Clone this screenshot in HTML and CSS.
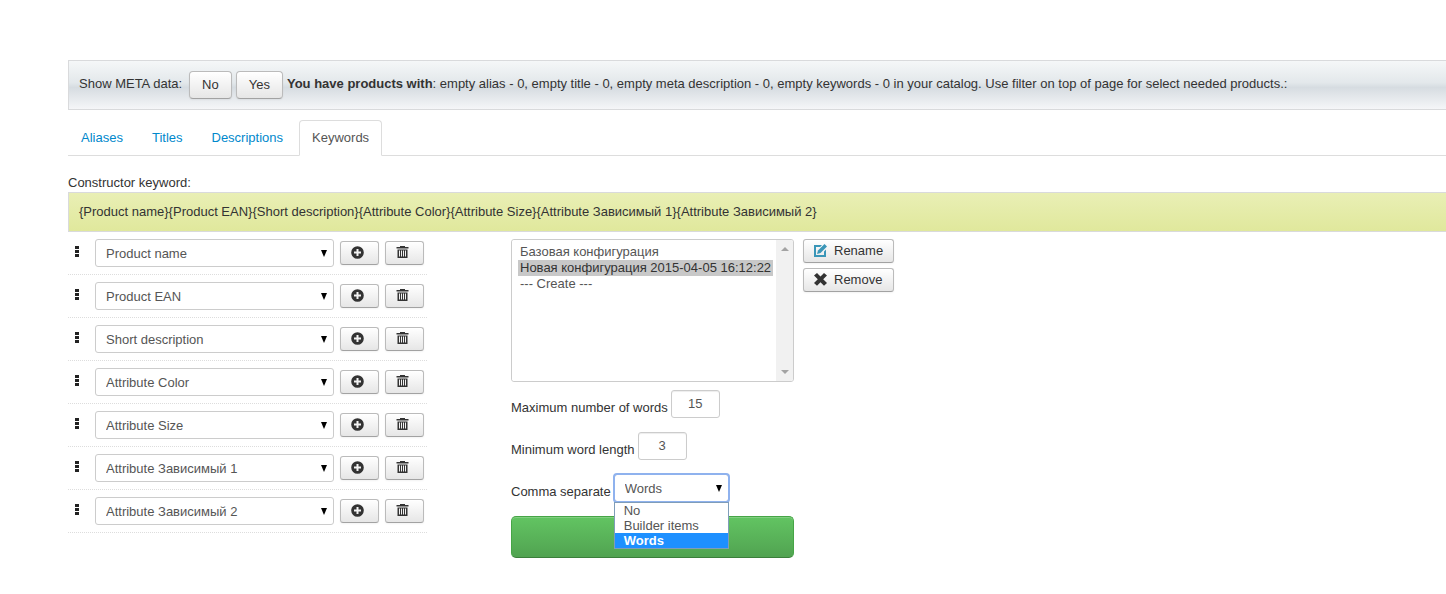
FILE: index.html
```
<!DOCTYPE html>
<html lang="en">
<head>
    <meta charset="UTF-8">
    <meta name="viewport" content="width=device-width, initial-scale=1.0">
    <title>Keywords constructor</title>
    <link rel="stylesheet" href="styles.css">
</head>
<body>
    <svg class="sprite" aria-hidden="true">
        <symbol id="icon-menu" viewBox="0 0 4 12">
            <path d="M0 0h4v3H0zM0 4h4v3H0zM0 8h4v3H0z"/>
        </symbol>
        <symbol id="icon-plus" viewBox="0 0 13 13">
            <path fill-rule="evenodd" d="M6.500 0.200a6.300 6.300 0 1 0 0 12.600a6.300 6.300 0 1 0 0-12.600zM5.500 3h2v2.500H10v2H7.500V10h-2V7.500H3v-2h2.500z"/>
        </symbol>
        <symbol id="icon-trash" viewBox="0 0 13 13">
            <path fill-rule="evenodd" d="M4 0h5v1h3.500v1.500h-12V1H4zM1.500 3.500h10V12h-10zM3 4.500v6h1v-6zM5 4.500v6h1v-6zM7 4.500v6h1v-6zM9 4.500v6h1v-6z"/>
        </symbol>
        <symbol id="icon-edit" viewBox="0 0 13 13">
            <path d="M0 1h8L6.200 3H2v8h8V7.500l2-2V13H0z"/>
            <path d="M10.500 0L13 2.500 6.500 9 3 10 4 6.500z"/>
        </symbol>
        <symbol id="icon-cancel" viewBox="0 0 13 13">
            <path d="M3 0L6.500 3.500 10 0 13 2.500 9.200 6.300 13 10 10 12.800 6.500 9.200 3 12.800 0 10 3.800 6.300 0 2.500z"/>
        </symbol>
    </svg>

    <div class="page">
        <div class="meta-bar">
            <span class="meta-label">Show META data:</span>
            <button type="button" class="btn">No</button>
            <button type="button" class="btn">Yes</button>
            <span><strong>You have products with</strong>: empty alias - 0, empty title - 0, empty meta description - 0, empty keywords - 0 in your catalog. Use filter on top of page for select needed products.:</span>
        </div>

        <nav class="tabs">
            <a href="#aliases">Aliases</a>
            <a href="#titles">Titles</a>
            <a href="#descriptions">Descriptions</a>
            <a href="#keywords" class="active">Keywords</a>
        </nav>

        <div class="constructor-title">Constructor keyword:</div>
        <div class="constructor">{Product name}{Product EAN}{Short description}{Attribute Color}{Attribute Size}{Attribute Зависимый 1}{Attribute Зависимый 2}</div>

        <div class="columns">
            <ul class="items">
                <li class="item">
                    <svg class="drag"><use href="#icon-menu"/></svg>
                    <select class="select" aria-label="Item 1"><option>Product name</option></select>
                    <button type="button" class="btn btn-small btn-icon" aria-label="Add"><svg class="icon"><use href="#icon-plus"/></svg></button>
                    <button type="button" class="btn btn-small btn-icon" aria-label="Delete"><svg class="icon"><use href="#icon-trash"/></svg></button>
                </li>
                <li class="item">
                    <svg class="drag"><use href="#icon-menu"/></svg>
                    <select class="select" aria-label="Item 2"><option>Product EAN</option></select>
                    <button type="button" class="btn btn-small btn-icon" aria-label="Add"><svg class="icon"><use href="#icon-plus"/></svg></button>
                    <button type="button" class="btn btn-small btn-icon" aria-label="Delete"><svg class="icon"><use href="#icon-trash"/></svg></button>
                </li>
                <li class="item">
                    <svg class="drag"><use href="#icon-menu"/></svg>
                    <select class="select" aria-label="Item 3"><option>Short description</option></select>
                    <button type="button" class="btn btn-small btn-icon" aria-label="Add"><svg class="icon"><use href="#icon-plus"/></svg></button>
                    <button type="button" class="btn btn-small btn-icon" aria-label="Delete"><svg class="icon"><use href="#icon-trash"/></svg></button>
                </li>
                <li class="item">
                    <svg class="drag"><use href="#icon-menu"/></svg>
                    <select class="select" aria-label="Item 4"><option>Attribute Color</option></select>
                    <button type="button" class="btn btn-small btn-icon" aria-label="Add"><svg class="icon"><use href="#icon-plus"/></svg></button>
                    <button type="button" class="btn btn-small btn-icon" aria-label="Delete"><svg class="icon"><use href="#icon-trash"/></svg></button>
                </li>
                <li class="item">
                    <svg class="drag"><use href="#icon-menu"/></svg>
                    <select class="select" aria-label="Item 5"><option>Attribute Size</option></select>
                    <button type="button" class="btn btn-small btn-icon" aria-label="Add"><svg class="icon"><use href="#icon-plus"/></svg></button>
                    <button type="button" class="btn btn-small btn-icon" aria-label="Delete"><svg class="icon"><use href="#icon-trash"/></svg></button>
                </li>
                <li class="item">
                    <svg class="drag"><use href="#icon-menu"/></svg>
                    <select class="select" aria-label="Item 6"><option>Attribute Зависимый 1</option></select>
                    <button type="button" class="btn btn-small btn-icon" aria-label="Add"><svg class="icon"><use href="#icon-plus"/></svg></button>
                    <button type="button" class="btn btn-small btn-icon" aria-label="Delete"><svg class="icon"><use href="#icon-trash"/></svg></button>
                </li>
                <li class="item">
                    <svg class="drag"><use href="#icon-menu"/></svg>
                    <select class="select" aria-label="Item 7"><option>Attribute Зависимый 2</option></select>
                    <button type="button" class="btn btn-small btn-icon" aria-label="Add"><svg class="icon"><use href="#icon-plus"/></svg></button>
                    <button type="button" class="btn btn-small btn-icon" aria-label="Delete"><svg class="icon"><use href="#icon-trash"/></svg></button>
                </li>
            </ul>

            <form class="settings">
                <div class="listbox">
                    <select class="config-list" size="8" aria-label="Configuration">
                        <option>Базовая конфигурация</option>
                        <option selected>Новая конфигурация 2015-04-05 16:12:22</option>
                        <option>--- Create ---</option>
                    </select>
                    <div class="scroll-track">
                        <svg class="scroll-arrow" viewBox="0 0 8 4"><path d="M4 0l4 4H0z"/></svg>
                        <svg class="scroll-arrow" viewBox="0 0 8 4"><path d="M0 0h8L4 4z"/></svg>
                    </div>
                </div>
                <div class="field">
                    <label for="max-words">Maximum number of words</label>
                    <input type="text" id="max-words" class="input" value="15">
                </div>
                <div class="field">
                    <label for="min-length">Minimum word length</label>
                    <input type="text" id="min-length" class="input" value="3">
                </div>
                <div class="field">
                    <label for="separate">Comma separate</label>
                    <div class="dropdown">
                        <select id="separate" class="select focused">
                            <option>No</option>
                            <option>Builder items</option>
                            <option selected>Words</option>
                        </select>
                        <ul class="dropdown-menu">
                            <li>No</li>
                            <li>Builder items</li>
                            <li class="selected">Words</li>
                        </ul>
                    </div>
                </div>
                <button type="button" class="btn-success" aria-label="Generate"></button>
            </form>

            <div class="actions">
                <button type="button" class="btn btn-small"><svg class="icon icon-blue"><use href="#icon-edit"/></svg>Rename</button>
                <button type="button" class="btn btn-small"><svg class="icon"><use href="#icon-cancel"/></svg>Remove</button>
            </div>
        </div>
    </div>
</body>
</html>
```
FILE: styles.css
```
* {
    box-sizing: border-box;
}
body {
    margin: 0;
    background: #fff;
    color: #333;
    font-family: "Liberation Sans", Arial, sans-serif;
    font-size: 13px;
    line-height: 18px;
}
button, input, select {
    margin: 0;
    font-family: inherit;
    font-size: 13px;
    line-height: 18px;
}
ul {
    list-style: none;
    margin: 0;
    padding: 0;
}
.sprite {
    display: none;
}
.page {
    padding: 60px 0 0 68px;
}

/* Top bar */
.meta-bar {
    display: flex;
    align-items: center;
    gap: 4px;
    height: 50px;
    padding: 0 10px 2px;
    border: 1px solid #d9dadc;
    border-right: 0;
    background: linear-gradient(#f5f7f8 0%, #e3e8eb 45%, #d6dce1 55%, #f5f6f8 100%);
    white-space: nowrap;
}
.meta-bar .btn {
    margin-top: 2px;
}
.meta-label {
    margin-right: 3px;
}
.btn {
    padding: 4px 12px;
    border: 1px solid #bbb;
    border-bottom-color: #a2a2a2;
    border-radius: 4px;
    background: linear-gradient(#fff, #e6e6e6);
    box-shadow: inset 0 1px 0 #fff, 0 1px 2px rgba(0, 0, 0, 0.05);
    color: #333;
}
.btn-small {
    display: flex;
    align-items: center;
    padding: 2px 10px;
    border-radius: 3px;
}
.btn-icon {
    width: 39px;
    height: 24px;
}
.icon {
    flex: none;
    width: 13px;
    height: 13px;
    margin-right: 7px;
    margin-bottom: 2px;
    fill: #333;
}
.icon-blue {
    fill: #3a96b8;
}

/* Tabs */
.tabs {
    display: flex;
    gap: 3px;
    margin: 10px 0 18px;
    border-bottom: 1px solid #ddd;
}
.tabs a {
    padding: 8px 12px;
    margin-bottom: -1px;
    border: 1px solid transparent;
    border-radius: 4px 4px 0 0;
    color: #08c;
    text-decoration: none;
}
.tabs .active {
    border-color: #ddd #ddd #fff;
    background: #fff;
    color: #555;
}

.constructor {
    padding: 10px;
    border: 1px solid #d9dadc;
    border-right: 0;
    background: linear-gradient(#e9efb5, #e0e89c);
}
.columns {
    display: flex;
    align-items: flex-start;
}

/* Constructor items */
.items {
    width: 359px;
    margin-right: 84px;
}
.item {
    display: flex;
    align-items: center;
    gap: 6px;
    padding: 7px 3px 7px 7px;
    border-bottom: 1px dotted #ddd;
}
.drag {
    width: 4px;
    height: 12px;
    margin: 0 10px 2px 0;
    fill: #222;
}
.select {
    flex: 1;
    height: 28px;
    padding: 1px 10px 0;
    border: 1px solid #ccc;
    border-radius: 3px;
    appearance: none;
    background: #fff url("data:image/svg+xml,%3Csvg xmlns='http://www.w3.org/2000/svg' width='6' height='7'%3E%3Cpath d='M0 0h6L3 7z'/%3E%3C/svg%3E") no-repeat right 6px center;
    color: #555;
}

/* Settings */
.settings {
    width: 283px;
    padding-top: 7px;
}
.listbox {
    display: flex;
    height: 143px;
    margin-bottom: 8px;
    border: 1px solid #ccc;
    border-radius: 3px;
    overflow: hidden;
}
.config-list {
    flex: 1;
    min-width: 0;
    height: 100%;
    padding: 4px 6px;
    border: 0;
    outline: 0;
    overflow: hidden;
    background: #fff;
    color: #555;
}
.config-list option {
    width: max-content;
    min-height: 0;
    padding: 0 2px 1px;
    line-height: 16px;
}
.config-list option:checked {
    background: #c8c8c8 linear-gradient(#c8c8c8, #c8c8c8);
    color: #333;
}
.scroll-track {
    display: flex;
    flex-direction: column;
    justify-content: space-between;
    align-items: center;
    width: 17px;
    padding: 7px 0;
    background: #f1f1f1;
}
.scroll-arrow {
    width: 8px;
    height: 4px;
    fill: #a3a3a3;
}
.field {
    display: flex;
    align-items: center;
    gap: 3px;
    margin-bottom: 14px;
}
.field label {
    padding-top: 8px;
}
.input {
    width: 49px;
    height: 28px;
    padding: 3px 6px 5px;
    border: 1px solid #ccc;
    border-radius: 3px;
    box-shadow: inset 0 1px 1px rgba(0, 0, 0, 0.075);
    color: #555;
    text-align: center;
}
.dropdown {
    position: relative;
    display: flex;
    width: 115px;
}
.focused {
    outline: 2px solid #8fb2ee;
    outline-offset: -1px;
}
.dropdown-menu {
    position: absolute;
    top: 100%;
    left: 0;
    width: 100%;
    border: 1px solid #7f9db9;
    background: #fff;
    color: #555;
    line-height: 15px;
}
.dropdown-menu li {
    padding: 0 9px;
}
.dropdown-menu .selected {
    background: #1e90ff;
    color: #fff;
    font-weight: bold;
}
.btn-success {
    display: block;
    width: 100%;
    height: 42px;
    border: 1px solid #46a546;
    border-bottom-color: #3b7f3b;
    border-radius: 5px;
    background: linear-gradient(#62c462, #51a351);
    box-shadow: inset 0 1px 0 rgba(255, 255, 255, 0.2);
}
.actions {
    display: flex;
    flex-direction: column;
    gap: 5px;
    padding: 7px 0 0 9px;
}
```
